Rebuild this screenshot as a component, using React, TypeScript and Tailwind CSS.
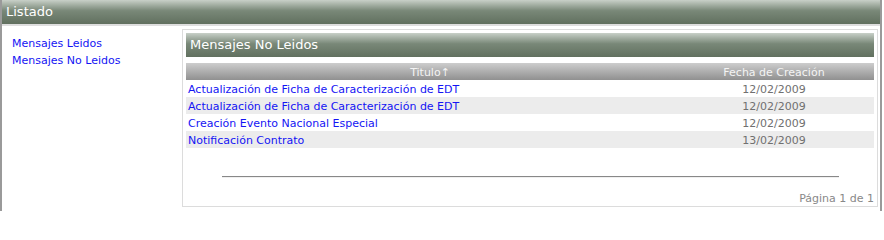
import React from "react";

const rows = [
  { titulo: "Actualización de Ficha de Caracterización de EDT", fecha: "12/02/2009" },
  { titulo: "Actualización de Ficha de Caracterización de EDT", fecha: "12/02/2009" },
  { titulo: "Creación Evento Nacional Especial", fecha: "12/02/2009" },
  { titulo: "Notificación Contrato", fecha: "13/02/2009" },
];

const font = { fontFamily: '"DejaVu Sans", Verdana, sans-serif' };

export default function App() {
  return (
    <div className="w-[882px] h-[211px] bg-white border-x-2 border-[#9a9a9a] text-[11px] leading-[13px]" style={font}>
      <div className="h-[24px] flex items-center px-[4px] text-[13px] leading-[16px] text-white bg-gradient-to-b from-[#c8d0c8] via-[#798878] via-45% to-[#61705f]">
        Listado
      </div>
      <div className="h-[2px] bg-[#dedede]" />
      <div className="flex">
        <div className="w-[180px] pl-[10px] pt-[9px] flex flex-col leading-[17px]">
          <a href="#" className="text-[#1414f4]">Mensajes Leidos</a>
          <a href="#" className="text-[#1414f4]">Mensajes No Leidos</a>
        </div>
        <div className="mt-[3px] w-[696px] h-[178px] border border-[#dcdcdc] p-[3px] flex flex-col">
          <div className="shrink-0 h-[24px] flex items-center px-[4px] text-[13px] leading-[16px] text-white bg-gradient-to-b from-[#c8d0c8] via-[#798878] via-45% to-[#61705f]">
            Mensajes No Leidos
          </div>
          <div className="shrink-0 mt-[6px] h-[17px] pt-[1px] flex items-center text-[#f4f4f4] bg-gradient-to-b from-[#cdcdcd] to-[#909090]">
            <div className="w-[488px] text-center">Titulo↑</div>
            <div className="flex-1 text-center">Fecha de Creación</div>
          </div>
          {rows.map((r, i) => (
            <div key={i} className={`shrink-0 h-[17px] pt-[1px] flex items-center ${i % 2 === 1 ? "bg-[#ececec]" : "bg-white"}`}>
              <div className="w-[488px] pl-[2px]">
                <a href="#" className="text-[#1414f4]">{r.titulo}</a>
              </div>
              <div className="flex-1 text-center text-[#707070]">{r.fecha}</div>
            </div>
          ))}
          <div className="shrink-0 mt-[28px] mx-auto w-[617px] h-[2px] border-t border-[#888] border-b border-b-[#f0f0f0]" />
          <div className="shrink-0 mt-[14px] text-right text-[#888]">Página 1 de 1</div>
        </div>
      </div>
    </div>
  );
}
